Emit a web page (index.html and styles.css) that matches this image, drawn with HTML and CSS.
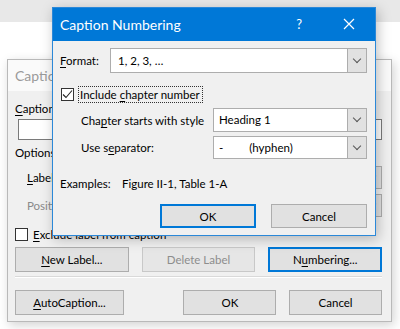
FILE: index.html
```html
<!DOCTYPE html>
<html lang="en">
<head>
    <meta charset="UTF-8">
    <title>Caption Numbering</title>
    <link rel="stylesheet" href="styles.css">
</head>
<body>
    <div class="desk-bar"></div>

    <!-- dialog behind: Caption -->
    <div class="dialog back">
        <div class="back-title">Caption</div>
        <div class="back-body">
            <div class="lbl"><u>C</u>aption:</div>
            <div class="textbox"></div>
            <div class="lbl options">Options</div>
            <div class="opt-row">
                <span class="opt-lbl"><u>L</u>abel:</span>
                <div class="combo"><span class="combo-val"></span><span class="drop"></span></div>
            </div>
            <div class="opt-row">
                <span class="opt-lbl dim">Position:</span>
                <div class="combo"><span class="combo-val"></span><span class="drop"></span></div>
            </div>
            <div class="check-row">
                <span class="checkbox"></span>
                <span><u>E</u>xclude label from caption</span>
            </div>
            <div class="btn-row">
                <button class="btn"><u>N</u>ew Label...</button>
                <button class="btn" disabled>Delete Label</button>
                <button class="btn focus">N<u>u</u>mbering...</button>
            </div>
            <div class="sep"></div>
            <div class="btn-row bottom">
                <button class="btn"><u>A</u>utoCaption...</button>
                <span class="spacer"></span>
                <button class="btn">OK</button>
                <button class="btn">Cancel</button>
            </div>
        </div>
    </div>

    <!-- dialog in front: Caption Numbering -->
    <div class="dialog front">
        <div class="front-title">
            <span class="title-text">Caption Numbering</span>
            <span class="title-help">?</span>
            <svg class="title-close" width="12" height="12" viewBox="0 0 12 12">
                <path d="M1 1 L11 11 M11 1 L1 11" stroke="#fff" stroke-width="1.2" fill="none"/>
            </svg>
        </div>
        <div class="front-body">
            <div class="row format-row">
                <span class="row-lbl"><u>F</u>ormat:</span>
                <div class="combo wide"><span class="combo-val">1, 2, 3, …</span><span class="drop"></span></div>
            </div>
            <div class="check-row include">
                <span class="checkbox">
                    <svg width="11" height="11" viewBox="0 0 11 11">
                        <path d="M1 5.5 L4 8.5 L10 1.5" stroke="#222" stroke-width="1.1" fill="none"/>
                    </svg>
                </span>
                <span class="focus-lbl">Include <u>c</u>hapter number</span>
            </div>
            <div class="row sub">
                <span class="row-lbl">Cha<u>p</u>ter starts with style</span>
                <div class="combo style"><span class="combo-val">Heading 1</span><span class="drop"></span></div>
            </div>
            <div class="row sub tight">
                <span class="row-lbl">Use s<u>e</u>parator:</span>
                <div class="combo style"><span class="combo-val">-<span class="gap"></span>(hyphen)</span><span class="drop"></span></div>
            </div>
            <p class="examples"><span class="ex-lbl">Examples:</span>Figure II-1, Table 1-A</p>
            <div class="front-btns">
                <button class="btn focus">OK</button>
                <button class="btn">Cancel</button>
            </div>
        </div>
    </div>
</body>
</html>
```

FILE: styles.css
```css
* {
    box-sizing: border-box;
}
body {
    margin: 0;
    width: 400px;
    height: 329px;
    overflow: hidden;
    position: relative;
    background-color: #ffffff;
    font-family: Lato, "Noto Sans", sans-serif;
    font-size: 11.5px;
    color: #000;
}
u {
    text-decoration-thickness: 1px;
    text-underline-offset: 2px;
}
.desk-bar {
    height: 22px;
    background-color: #e8e8e8;
}
.dialog {
    position: absolute;
    background-color: #f0f0f0;
}

/* back dialog */
.back {
    left: 7px;
    top: 59px;
    width: 385px;
    height: 263px;
    border: 1px solid #b9b9b9;
    box-shadow: 2px 3px 10px rgba(0, 0, 0, 0.18);
}
.back-title {
    height: 31px;
    background-color: #fafafa;
    color: #9a9a9a;
    font-size: 14px;
    padding: 7px 0 0 7px;
}
.back-body {
    padding: 10px 9px 0 7px;
}
.lbl {
    height: 16px;
    line-height: 16px;
}
.textbox {
    margin: 2px 0 0 3px;
    height: 21px;
    background-color: #fff;
    border: 1px solid #7a7a7a;
}
.options {
    margin-top: 5px;
}
.opt-row {
    display: flex;
    align-items: center;
    justify-content: space-between;
    margin-top: 5px;
    padding-left: 12px;
    white-space: nowrap;
}
.opt-lbl.dim {
    color: #8a8a8a;
}
.combo {
    display: flex;
    flex-shrink: 0;
    height: 23px;
    width: 280px;
    border: 1px solid #adadad;
    background-color: #fff;
}
.combo-val {
    flex: 1;
    padding-left: 5px;
    line-height: 21px;
    white-space: pre;
}
.drop {
    width: 19px;
    border-left: 1px solid #adadad;
    background-color: #e1e1e1;
    position: relative;
}
.drop::after {
    content: "";
    position: absolute;
    left: 6px;
    top: 6px;
    width: 5px;
    height: 5px;
    border-right: 1px solid #555;
    border-bottom: 1px solid #555;
    transform: rotate(45deg);
}
.check-row {
    display: flex;
    align-items: center;
    gap: 5px;
    margin-top: 10px;
    height: 14px;
    white-space: nowrap;
}
.checkbox {
    flex-shrink: 0;
    width: 13px;
    height: 13px;
    border: 1px solid #333;
    background-color: #fff;
    display: flex;
    align-items: center;
    justify-content: center;
}
.btn-row {
    display: flex;
    gap: 13px;
    margin-top: 6px;
}
.btn {
    font-family: inherit;
    font-size: 11.5px;
    color: #000;
    width: 114px;
    height: 25px;
    padding: 0;
    background-color: #e1e1e1;
    border: 1px solid #adadad;
}
.btn:disabled {
    color: #8d8d8d;
    background-color: #e6e6e6;
    border-color: #c8c8c8;
}
.btn.focus {
    border: 2px solid #0078d7;
}
.sep {
    margin-top: 4px;
    height: 2px;
    border-top: 1px solid #d9d9d9;
    border-bottom: 1px solid #fff;
}
.btn-row.bottom {
    margin-top: 12px;
}
.btn-row.bottom .spacer {
    width: 35px;
}
.btn-row.bottom .btn + .btn,
.btn-row.bottom .spacer + .btn {
    width: 97px;
}

/* front dialog */
.front {
    left: 52px;
    top: 7px;
    width: 324px;
    height: 229px;
    border: 1px solid #2b88d8;
    box-shadow: 2px 3px 12px rgba(0, 0, 0, 0.25);
}
.front-title {
    height: 33px;
    background-color: #0078d7;
    color: #fff;
    display: flex;
    align-items: center;
    padding: 0 0 1px 7px;
}
.title-text {
    font-size: 14px;
    flex: 1;
}
.title-help {
    font-size: 13px;
    margin-right: 41px;
}
.title-close {
    margin-right: 20px;
}
.front-body {
    padding: 7px 8px 0 7px;
}
.row {
    display: flex;
    align-items: center;
    justify-content: space-between;
    white-space: nowrap;
}
.combo.wide {
    width: 257px;
    height: 25px;
}
.combo.wide .combo-val {
    line-height: 23px;
    padding-left: 7px;
}
.combo.wide .drop::after {
    top: 7px;
}
.include {
    margin-top: 13px;
    height: 16px;
    padding-left: 1px;
}
.focus-lbl {
    outline: 1px dotted #333;
    padding: 0 2px 0 1px;
    line-height: 15px;
}
.sub {
    margin-top: 6px;
    padding-left: 21px;
}
.sub.tight {
    margin-top: 4px;
}
.combo.style {
    width: 154px;
    height: 24px;
}
.combo.style .combo-val {
    line-height: 22px;
}
.sub.tight .combo.style {
    height: 23px;
}
.sub.tight .combo-val {
    line-height: 21px;
}
.gap {
    display: inline-block;
    width: 26px;
}
.examples {
    margin: 17px 0 0 0;
    padding: 0;
    line-height: 15px;
    white-space: nowrap;
}
.ex-lbl {
    display: inline-block;
    width: 62px;
}
.front-btns {
    display: flex;
    justify-content: flex-end;
    gap: 15px;
    margin-top: 13px;
}
.front-btns .btn {
    width: 96px;
    height: 24px;
}
```
